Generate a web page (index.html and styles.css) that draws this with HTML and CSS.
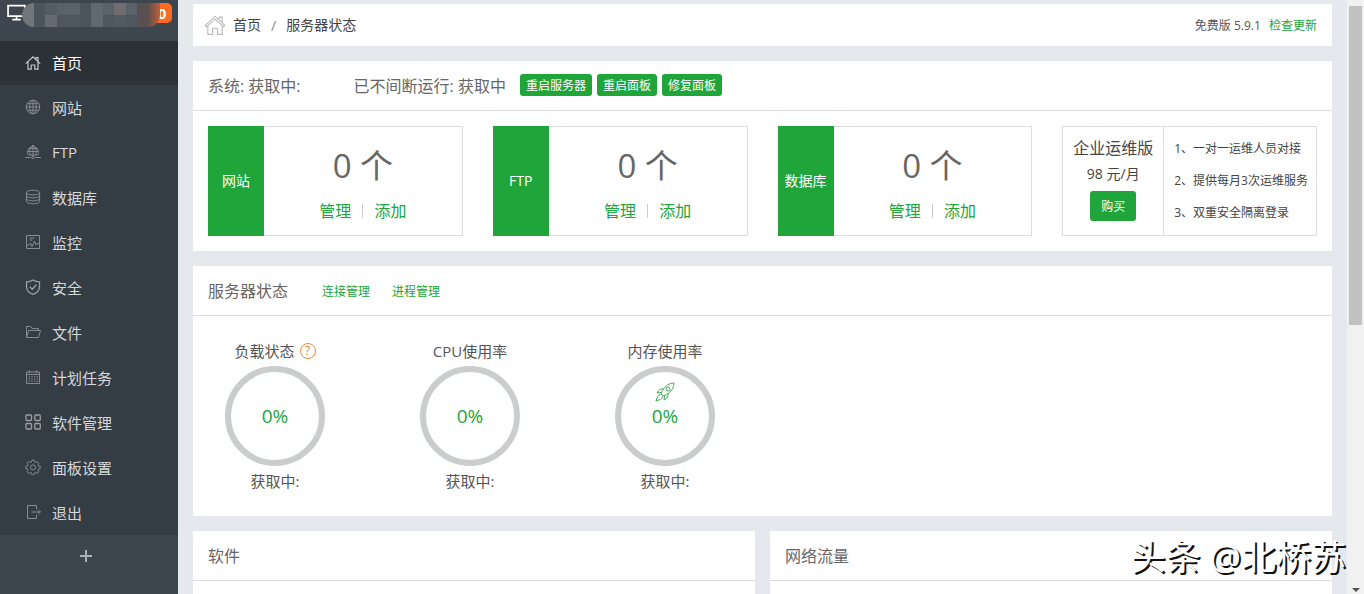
FILE: index.html
```html
<!DOCTYPE html>
<html lang="zh-CN">
<head>
<meta charset="utf-8">
<title>服务器状态</title>
<link rel="stylesheet" href="styles.css">
</head>
<body>
<div class="app">
  <aside class="sidebar">
    <div class="brand">
      <svg class="monitor" viewBox="0 0 18 18" fill="none" stroke="#fff" stroke-width="1.6"><path d="M1 2h16v10H1zM9 12v3M5 15.200h8"/></svg>
      <span class="badge">0</span>
      <div class="mosaic"><i class="m1"></i><i class="m2"></i><i class="m3"></i><i class="m4"></i><i class="m4"></i><i class="m2"></i><i class="m5"></i><i class="m4"></i><i class="m6"></i><i class="m4"></i><i class="m7"></i><i class="m8"></i></div>
    </div>
    <nav class="menu">
      <a class="item active" href="#"><svg viewBox="0 0 16 16"><path d="M.8 8.6 8 1.8l7.200 6.800M3 7v7.200h3.200V10h3.600v4.200H13V7M11 4.200V2.500h2v3.600"/></svg>首页</a>
      <a class="item" href="#"><svg viewBox="0 0 16 16"><circle cx="8" cy="8" r="6.800"/><ellipse cx="8" cy="8" rx="3.300" ry="6.800"/><path d="M8 1.200v13.600M1.200 8h13.600M2.200 4.700h11.600M2.200 11.300h11.600"/></svg>网站</a>
      <a class="item" href="#"><svg viewBox="0 0 16 16"><path d="M3.200 11A5.500 5.500 0 1 1 12.800 11ZM8 1v10M2.600 7.500h10.800M3.500 4.500h9M5.500 11C4 7.500 5 3 8 1c3 2 4 6.500 2.500 10M0 13.500h6M10 13.500h6M8 11v1.500"/><circle cx="8" cy="13.500" r="1.200"/></svg>FTP</a>
      <a class="item" href="#"><svg viewBox="0 0 16 16"><ellipse cx="8" cy="3.600" rx="6.600" ry="2.400"/><path d="M1.400 3.600v8.800c0 3.200 13.200 3.200 13.200 0V3.600M1.400 6.500c0 3.200 13.200 3.200 13.200 0M1.400 9.500c0 3.200 13.200 3.200 13.200 0"/></svg>数据库</a>
      <a class="item" href="#"><svg viewBox="0 0 16 16"><path d="M1.500 1.500h13v13h-13zM2 11h2l1.500-2 1.500 3.500L9.500 7l1.500 4 1-1.500h2M4.500 4h5M4.500 6h3"/></svg>监控</a>
      <a class="item" href="#"><svg class="strong" viewBox="0 0 16 16"><path d="M8 1c2 1.300 4.200 1.800 6.500 1.800V8c0 3.500-2.500 5.800-6.500 7.300C4 13.800 1.500 11.500 1.500 8V2.800C3.800 2.800 6 2.300 8 1ZM4.800 7.800l2.400 2.400 4.200-4.500"/></svg>安全</a>
      <a class="item" href="#"><svg viewBox="0 0 16 16"><path d="M1.500 13.500v-11h4.300l1.200 2h6.500v2M1.500 13.500l2.200-7h11.800l-2 7z"/></svg>文件</a>
      <a class="item" href="#"><svg viewBox="0 0 16 16"><path d="M1.500 3h13v11.500h-13zM1.500 5.500h13M4.500 1.200v3M11.500 1.200v3"/><path stroke-dasharray="1.500 1.200" d="M3.500 7.800h9.500M3.500 10h9.500M3.500 12.200h9.500"/></svg>计划任务</a>
      <a class="item" href="#"><svg class="strong" viewBox="0 0 16 16"><rect x="1" y="1" width="5.500" height="5.500" rx="1"/><rect x="9.800" y="1" width="5.500" height="5.500" rx="1"/><rect x="1" y="9.500" width="5.500" height="5.500" rx="1"/><rect x="9.800" y="9.500" width="5.500" height="5.500" rx="1"/></svg>软件管理</a>
      <a class="item" href="#"><svg viewBox="0 0 16 16"><path d="M6.800 1.200h2.400l.4 1.900 1.100.5 1.700-1.100 1.600 1.700-1 1.600.4 1.200 1.800.3v2.300l-1.800.4-.5 1.200 1.100 1.600-1.700 1.600-1.600-1-1.100.4-.4 1.900H6.800l-.4-1.900-1.100-.4-1.600 1-1.700-1.600 1.100-1.600-.5-1.200-1.800-.4V7.300l1.800-.3.4-1.200-1-1.600 1.600-1.700 1.700 1.100 1.100-.5z"/><circle cx="8" cy="8.400" r="2.500"/></svg>面板设置</a>
      <a class="item" href="#"><svg viewBox="0 0 16 16"><path d="M11.500 5V1.500h-9v13h9V11M6.500 8h9M13.300 5.800 15.500 8l-2.200 2.200"/></svg>退出</a>
    </nav>
    <button class="add" aria-label="添加菜单"><svg viewBox="0 0 14 14"><path d="M7 1v12M1 7h12"/></svg></button>
  </aside>

  <main class="main">
    <header class="topbar">
      <svg class="home" viewBox="0 0 20 20"><path d="M1 10.500 10 2l9 8.500-1.300 1.200L10 4.500l-7.700 7.200zM3.500 11v7.500h4.300V13h4.400v5.500h4.300V11M13.800 5V2.800h2.700v5"/></svg>
      <a class="crumb" href="#">首页</a><span class="slash">/</span><span class="crumb">服务器状态</span>
      <div class="version">免费版 5.9.1 <a class="link" href="#">检查更新</a></div>
    </header>

    <section class="panel">
      <div class="panel-head">
        <span class="system">系统: 获取中:</span>
        <span>已不间断运行: 获取中</span>
        <div class="actions"><button class="btn">重启服务器</button><button class="btn">重启面板</button><button class="btn">修复面板</button></div>
      </div>
      <div class="cards">
        <div class="card"><div class="card-name">网站</div><div class="card-body"><div class="count">0 个</div><div class="card-links"><a class="link" href="#">管理</a><i class="bar"></i><a class="link" href="#">添加</a></div></div></div>
        <div class="card"><div class="card-name">FTP</div><div class="card-body"><div class="count">0 个</div><div class="card-links"><a class="link" href="#">管理</a><i class="bar"></i><a class="link" href="#">添加</a></div></div></div>
        <div class="card"><div class="card-name">数据库</div><div class="card-body"><div class="count">0 个</div><div class="card-links"><a class="link" href="#">管理</a><i class="bar"></i><a class="link" href="#">添加</a></div></div></div>
        <div class="card plan">
          <div class="offer"><div class="offer-name">企业运维版</div><div class="price">98 元/月</div><button class="btn buy">购买</button></div>
          <ul class="features"><li>1、一对一运维人员对接</li><li>2、提供每月3次运维服务</li><li>3、双重安全隔离登录</li></ul>
        </div>
      </div>
    </section>

    <section class="panel">
      <div class="panel-head">
        <span class="title">服务器状态</span>
        <a class="link small" href="#">连接管理</a><a class="link small" href="#">进程管理</a>
      </div>
      <div class="gauges">
        <div class="gauge"><div class="gauge-name">负载状态<span class="help">?</span></div><div class="ring">0%</div><div>获取中:</div></div>
        <div class="gauge"><div class="gauge-name">CPU使用率</div><div class="ring">0%</div><div>获取中:</div></div>
        <div class="gauge"><div class="gauge-name">内存使用率</div><div class="ring"><svg class="rocket" viewBox="0 0 20 20"><path d="M19 1c-5 .2-8.500 2.500-11.500 7.500L6 12l2 2 3.500-1.500C16.500 9.500 18.800 6 19 1ZM8.500 7C5.500 6.500 3.500 8 2 11l4.300-.5M13 11.500c.5 3-1 5-4 6.500l.5-4.300M5.500 12.500C3 13 2 15 1 19c4-1 6-2 6.500-4.500"/><circle cx="13" cy="7" r="2"/></svg>0%</div><div>获取中:</div></div>
      </div>
    </section>

    <div class="columns">
      <section class="panel short"><div class="panel-head">软件</div></section>
      <section class="panel short"><div class="panel-head">网络流量</div></section>
    </div>
  </main>

  <div class="scroll"><div class="thumb"></div><i class="down"></i></div>
  <div class="watermark">头条 @北桥苏</div>
</div>
</body>
</html>
```
FILE: styles.css
```css
* { box-sizing: border-box; }
body {
  margin: 0;
  font-family: "Open Sans", "Noto Sans CJK SC", sans-serif;
  font-size: 12px;
  color: #555;
  background: #e5e8ed;
}
a { color: inherit; text-decoration: none; }
button { font: inherit; border: 0; cursor: pointer; }
svg { fill: none; flex: none; }
.app { position: relative; display: flex; height: 100vh; overflow: hidden; }

.sidebar { width: 178px; flex: none; background: #3d464d; color: #d5d8da; }
.brand { position: relative; height: 41px; padding: 3px 7px; background: #3d454e; }
.monitor { width: 19px; height: 20px; }
.badge { position: absolute; left: 152px; top: 3px; width: 20px; height: 20px; border-radius: 5px; background: #ff6b24; color: #fff; font-size: 15px; font-weight: 700; line-height: 20px; text-align: center; }
.mosaic { position: absolute; left: 22px; top: 3px; display: grid; grid-template-columns: repeat(12, 1fr); width: 138px; height: 24px; border-radius: 12px 0 12px 12px; overflow: hidden; }
.m1 { background: #70757c; }
.m2 { background: #4b535c; }
.m3 { background: linear-gradient(#535c65 50%, #646b74 50%); }
.m4 { background: linear-gradient(#59616a 50%, #4e565f 50%); }
.m5 { background: #606870; }
.m6 { background: linear-gradient(#716c70 50%, #515a63 50%); }
.m7 { background: #594f51; }
.m8 { background: linear-gradient(90deg, #6b4d45, #b9623f); }
.menu { background: #353d44; }
.item { display: flex; align-items: center; gap: 11px; height: 45px; padding: 0 0 1px 25px; font-size: 15px; }
.item svg { width: 16px; height: 16px; stroke: #858b90; stroke-width: 1; }
.item .strong { stroke: #9a9fa3; stroke-width: 1.3; }
.item.active { height: 44px; background: #2c3138; color: #fff; }
.item.active svg { stroke: #c3c6c9; stroke-width: 1.2; }
.add { display: flex; justify-content: center; width: 100%; padding: 14px 7px 14px 0; background: none; }
.add svg { width: 14px; height: 14px; stroke: #abb0b4; stroke-width: 2; }

.main { flex: 1; min-width: 0; padding: 4px 15px 0; display: flex; flex-direction: column; gap: 15px; }
.topbar { display: flex; align-items: center; flex: none; height: 42px; padding: 0 15px 0 11px; background: #fff; }
.home { width: 22px; height: 22px; margin-right: 7px; stroke: #bbb; stroke-width: 1; }
.crumb { padding-bottom: 2px; font-size: 14px; color: #444; }
.slash { margin: 0 10px; font-size: 14px; color: #888; }
.version { margin-left: auto; }
.version .link { margin-left: 5px; }
.link { color: #20a53a; }

.panel { flex: none; background: #fff; }
.panel-head { display: flex; align-items: center; height: 50px; padding: 0 15px 1px; border-bottom: 1px solid #ddd; font-size: 16px; color: #666; }
.system { margin-right: 53px; }
.actions { display: flex; gap: 5px; margin-left: 14px; }
.btn { height: 22px; padding: 2px 6px 0; border-radius: 3px; background: #20a53a; color: #fff; font-size: 12px; line-height: 20px; }
.title { margin-right: 12px; }
.small { margin-left: 22px; padding-top: 1px; font-size: 12px; }

.cards { display: grid; grid-template-columns: repeat(4, 1fr); gap: 30px; padding: 15px; }
.card { display: flex; height: 110px; border: 1px solid #ddd; min-width: 0; }
.card-name { display: flex; align-items: center; justify-content: center; flex: none; width: 56px; margin: -1px 0 -1px -1px; padding-bottom: 2px; background: #20a53a; color: #fff; font-size: 14px; white-space: nowrap; }
.card-body { flex: 1; text-align: center; padding-top: 15px; }
.count { font-size: 33px; line-height: 48px; color: #666; }
.card-links { display: flex; justify-content: center; align-items: center; gap: 11px; padding-top: 9px; font-size: 16px; line-height: 24px; }
.bar { width: 1px; height: 14px; background: #ccc; }
.offer { display: flex; flex-direction: column; align-items: center; flex: none; width: 101px; padding-top: 9px; border-right: 1px solid #ddd; color: #444; }
.offer-name { font-size: 16px; line-height: 25px; }
.price { font-size: 14px; line-height: 25px; }
.buy { height: 30px; margin-top: 5px; padding: 2px 11px 0; }
.features { margin: 0; padding: 6px 0 0 10px; list-style: none; line-height: 32px; color: #444; white-space: nowrap; }

.gauges { display: flex; gap: 61px; height: 200px; padding: 25px 15px 0; font-size: 15px; }
.gauge { display: flex; flex-direction: column; align-items: center; width: 134px; line-height: 20px; }
.gauge-name { display: flex; align-items: center; gap: 5px; margin-bottom: 5px; }
.help { width: 16px; height: 16px; border: 1px solid #f0883a; border-radius: 50%; color: #e8761e; font-size: 12px; line-height: 14px; text-align: center; }
.ring { position: relative; display: flex; align-items: center; justify-content: center; width: 100px; height: 100px; margin-bottom: 5px; border: 6px solid #cbcccc; border-radius: 50%; color: #20a53a; font-size: 19px; }
.rocket { position: absolute; top: 10px; left: 34px; width: 20px; height: 20px; stroke: #3cad52; stroke-width: 1; }
.columns { display: grid; grid-template-columns: 1fr 1fr; gap: 15px; }
.short { height: 200px; }

.scroll { position: relative; flex: none; width: 17px; padding: 6px 2px 0; background: #f1f1f1; }
.thumb { height: 319px; background: #c1c1c1; }
.down { position: absolute; left: 5px; bottom: 2px; border: 4px solid transparent; border-top-color: #505050; border-bottom: 0; }
.watermark { position: absolute; right: 18px; bottom: 14px; color: #fff; font-size: 35px; line-height: 46px; text-shadow: 2px 2px 0 #111; white-space: nowrap; }
```
